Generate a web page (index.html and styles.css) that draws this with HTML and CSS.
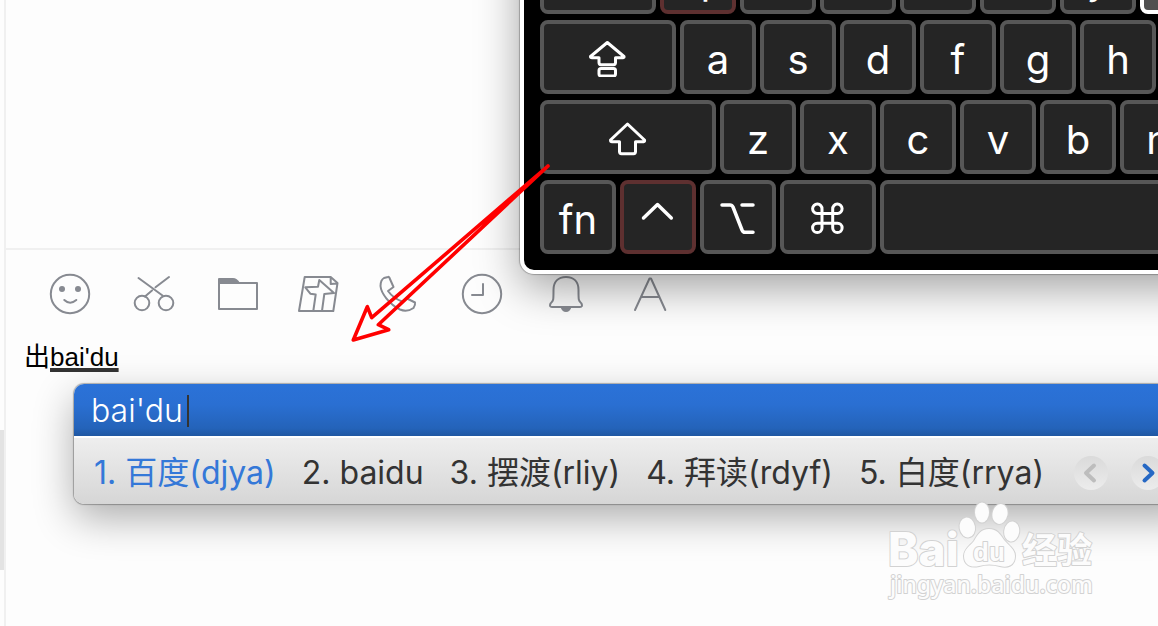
FILE: index.html
```html
<!DOCTYPE html>
<html lang="zh-CN">
<head>
<meta charset="utf-8">
<meta name="viewport" content="width=device-width, initial-scale=1">
<title>出bai'du</title>
<link rel="stylesheet" href="styles.css">
</head>
<body>
<div class="app">
  <div class="gutter"><div class="thumb"></div></div>
  <main class="chat">
    <section class="history"></section>
    <div class="toolbar">
      <button class="tool" type="button" aria-label="表情"><svg class="tool-icon" viewBox="0 0 44 44"><circle cx="22" cy="22" r="19.2"/><circle class="solid" cx="14" cy="17" r="3"/><circle class="solid" cx="30" cy="17" r="3"/><path d="M16.3 28Q22 33.400 28.300 28"/></svg></button>
      <button class="tool" type="button" aria-label="截图"><svg class="tool-icon" viewBox="0 0 44 44"><path d="M6.500 6L30.500 23.500M37 5L23.500 15.300M20 18.500L13 24.500"/><circle cx="10" cy="31" r="7.300"/><circle cx="34" cy="31" r="7.300"/></svg></button>
      <button class="tool" type="button" aria-label="文件"><svg class="tool-icon" viewBox="0 0 44 44"><path d="M3 11H41V37H3Z"/><path class="solid" d="M2 12V7Q2 6 3 6H17Q21 6 24 11V12Z"/></svg></button>
      <button class="tool tool-narrow" type="button" aria-label="地图"><svg class="tool-icon" viewBox="0 0 44 44"><path d="M8.700 5H34.700L41.500 11L37.300 39H3ZM34.700 5V12L41.500 11.500M17.300 39L19.700 22.500L14.300 21.700L9.300 15.300L22 14.700L23.300 8L38 21L28.300 22L26 39"/></svg></button>
      <button class="tool" type="button" aria-label="通话"><svg class="tool-icon" viewBox="0 0 44 44"><path d="M12 5Q13 4.500 13.500 6L17.500 15L12 19Q17 26 26 29.500L31 26.500L39 30.500Q39.500 33 37.500 36Q31 40.500 24 37.500C13 32 5 21 4.500 14Q4.500 8 8 6Z"/></svg></button>
      <button class="tool" type="button" aria-label="聊天记录"><svg class="tool-icon" viewBox="0 0 44 44"><circle cx="22" cy="22" r="19.200"/><path d="M23 12V23H12"/></svg></button>
      <button class="tool" type="button" aria-label="提醒"><svg class="tool-icon" viewBox="0 0 44 44"><path d="M22 5C14 5 9.500 10 9.500 18C9.500 29 9.500 28.500 6.500 31.500Q5 35 8 35H36Q39 35 37.500 31.500C34.500 28.500 34.500 29 34.500 18C34.500 10 30 5 22 5Z"/><path class="solid" d="M16.500 35H27.500Q26 40 22 40T16.500 35Z"/></svg></button>
      <button class="tool" type="button" aria-label="字体"><svg class="tool-icon" viewBox="0 0 44 44"><path d="M7 38L21.500 6.500H23L37.300 38M13 25H31.500"/></svg></button>
    </div>
    <div class="editor" role="textbox" aria-label="消息" contenteditable="true" spellcheck="false">出<span class="composing">bai'du</span></div>
  </main>
</div>

<section class="keyboard" aria-label="键盘">
  <div class="row">
    <button class="key key-tab" type="button" aria-label="tab"></button>
    <button class="key key-letter key-held" type="button">q</button>
    <button class="key" type="button" aria-label="w"></button>
    <button class="key" type="button" aria-label="e"></button>
    <button class="key" type="button" aria-label="r"></button>
    <button class="key" type="button" aria-label="t"></button>
    <button class="key key-letter" type="button">y</button>
    <button class="key key-pressed" type="button" aria-label="u"></button>
  </div>
  <div class="row">
    <button class="key key-caps" type="button" aria-label="caps lock"><svg class="key-icon" viewBox="0 0 40 40"><path d="M19.300 5.500L2.500 19.500Q2.500 20.700 4 20.700H11V25.500Q11 27.700 13 27.700H25.500Q27.500 27.700 27.500 25.500V20.700H35Q36.500 20.500 36 19.500Z"/><rect x="11" y="31.500" width="16.500" height="7.500" rx="2"/></svg></button>
    <button class="key key-letter" type="button">a</button>
    <button class="key key-letter" type="button">s</button>
    <button class="key key-letter" type="button">d</button>
    <button class="key key-letter" type="button">f</button>
    <button class="key key-letter" type="button">g</button>
    <button class="key key-letter" type="button">h</button>
  </div>
  <div class="row">
    <button class="key key-shift" type="button" aria-label="shift"><svg class="key-icon" viewBox="0 0 40 40"><path d="M19.500 7L2.500 23Q2.500 24.700 4 24.700H11.500V34.500Q11.500 36.700 13.500 36.700H25.500Q27.500 36.700 27.500 34.500V24.700H35.500Q37 24.500 36.500 23Z"/></svg></button>
    <button class="key key-letter" type="button">z</button>
    <button class="key key-letter" type="button">x</button>
    <button class="key key-letter" type="button">c</button>
    <button class="key key-letter" type="button">v</button>
    <button class="key key-letter" type="button">b</button>
    <button class="key key-letter" type="button">n</button>
  </div>
  <div class="row">
    <button class="key key-letter" type="button">fn</button>
    <button class="key key-held" type="button" aria-label="control"><svg class="key-icon key-icon-bold" viewBox="0 0 40 40"><path d="M5.500 21L19.500 7.500L33.300 21"/></svg></button>
    <button class="key" type="button" aria-label="option"><svg class="key-icon key-icon-bold" viewBox="0 0 40 40"><path d="M4 8H12Q14 8 15 10L24 33Q25 35.300 27 35.300H35M24 8H35"/></svg></button>
    <button class="key key-command" type="button" aria-label="command"><svg class="key-icon" viewBox="0 0 40 40"><path d="M14 16.500V12A4.700 4.700 0 1 0 9.200 16.500H29.500A4.700 4.700 0 1 0 24.700 12V31A4.700 4.700 0 1 0 29.500 26.200H9.200A4.700 4.700 0 1 0 14 31Z"/></svg></button>
    <button class="key key-space" type="button" aria-label="space"></button>
  </div>
</section>

<section class="ime" aria-label="输入法">
  <div class="ime-input">bai'du<span class="caret"></span></div>
  <div class="ime-bar">
    <ol class="candidates">
      <li class="candidate candidate-active">1. 百度(djya)</li>
      <li class="candidate">2. baidu</li>
      <li class="candidate">3. 摆渡(rliy)</li>
      <li class="candidate">4. 拜读(rdyf)</li>
      <li class="candidate">5. 白度(rrya)</li>
    </ol>
    <div class="pager">
      <button class="page" type="button" aria-label="上一页" disabled><svg class="page-icon" viewBox="0 0 34 34"><path d="M20 9.500L12 17L20 24.500"/></svg></button>
      <button class="page page-next" type="button" aria-label="下一页"><svg class="page-icon" viewBox="0 0 34 34"><path d="M13.500 9.500L21.500 17L13.500 24.500"/></svg></button>
    </div>
  </div>
</section>

<svg class="pointer" viewBox="0 0 202 182" aria-hidden="true"><path d="M198 6L21.700 157.700L17.300 146.700L3.300 180L38.700 169.700L28.300 164.700Z"/></svg>

<svg class="watermark" viewBox="0 0 226 110" role="img" aria-label="Baidu 经验">
  <g class="mark">
    <text class="mark-latin" x="8" y="70">Bai</text>
    <ellipse cx="102" cy="16.500" rx="7" ry="10"/>
    <ellipse cx="120" cy="18" rx="7.500" ry="10" transform="rotate(12 120 18)"/>
    <ellipse cx="87.300" cy="31.500" rx="7.700" ry="10" transform="rotate(-10 87.300 31.500)"/>
    <ellipse cx="131.700" cy="35.500" rx="7.500" ry="10" transform="rotate(8 131.700 35.500)"/>
    <path d="M109 33C117 33 120 38 124 44C129 50 135 53 135 60C135 70 127 72 120 70Q109 67 99 70C91 72 84 69 84 60C84 53 90 50 94 45C98 38 101 33 109 33Z"/>
    <text class="mark-du" x="93" y="65">du</text>
    <text class="mark-cjk" x="142" y="67">经验</text>
    <text class="mark-url" x="10" y="97">jingyan.baidu.com</text>
  </g>
</svg>
</body>
</html>
```
FILE: styles.css
```css
* {
  box-sizing: border-box;
}

body {
  margin: 0;
  position: relative;
  min-height: 100vh;
  overflow: hidden;
  background: #fdfdfd;
  font-family: "Liberation Sans", "Noto Sans CJK SC", sans-serif;
}

button {
  margin: 0;
  padding: 0;
  border: 0;
  background: none;
  color: inherit;
  font: inherit;
}

svg {
  display: block;
  flex: none;
}

.app {
  display: flex;
  min-height: 100vh;
}

.gutter {
  display: flex;
  width: 6px;
  padding: 430px 0 56px;
  border-right: 2px solid #f0f0f0;
}

.thumb {
  flex: 1;
  background: #e3e3e3;
}

.chat {
  display: flex;
  flex: 1;
  flex-direction: column;
}

.history {
  height: 250px;
  border-bottom: 2px solid #f0f0f0;
}

.toolbar {
  display: flex;
  gap: 40px;
  padding: 22px 42px;
}

.tool {
  display: flex;
  justify-content: center;
  width: 44px;
  height: 44px;
}

.tool-narrow {
  width: 36px;
}

.tool-icon {
  width: 44px;
  height: 44px;
  fill: none;
  stroke: #878a91;
  stroke-width: 2;
  stroke-linecap: round;
  stroke-linejoin: round;
}

.tool-icon .solid {
  fill: #878a91;
  stroke: none;
}

.editor {
  flex: 1;
  padding: 4px 18px;
  color: #000;
  font-size: 26px;
  line-height: 30px;
  outline: none;
}

.composing {
  text-decoration: underline 4px #333;
  text-decoration-skip-ink: none;
  text-underline-offset: 2px;
}

.keyboard {
  position: absolute;
  top: -80px;
  left: 520px;
  display: flex;
  flex-direction: column;
  gap: 6px;
  padding: 16px;
  border: 4px solid #fff;
  border-radius: 14px;
  background: #000;
  box-shadow: 0 0 1px 1px rgba(0, 0, 0, 0.25), 0 14px 44px rgba(0, 0, 0, 0.36);
  color: #fff;
  font-family: Inter, "Liberation Sans", sans-serif;
  font-size: 40px;
  line-height: 50px;
}

.row {
  display: flex;
  gap: 4px;
}

.key {
  display: flex;
  flex: none;
  align-items: center;
  justify-content: center;
  width: 76px;
  height: 74px;
  border: 4px solid #575757;
  border-radius: 8px;
  background: #252525;
}

.key-letter {
  padding-top: 5px;
}

.key-held {
  border-color: #5e3030;
}

.key-pressed {
  border-color: #fff;
  background: #505050;
}

.key-tab {
  width: 116px;
}

.key-caps {
  width: 136px;
}

.key-shift {
  width: 176px;
}

.key-command {
  width: 96px;
}

.key-space {
  width: 396px;
}

.key-icon {
  width: 40px;
  height: 40px;
  fill: none;
  stroke: #fff;
  stroke-width: 3;
  stroke-linecap: round;
  stroke-linejoin: round;
}

.key-icon-bold {
  stroke-width: 3.500;
}

.ime {
  position: absolute;
  top: 384px;
  right: -40px;
  left: 74px;
  border-radius: 10px;
  background: #fff;
  box-shadow: 0 0 1px 1px rgba(0, 0, 0, 0.28), 0 14px 40px rgba(0, 0, 0, 0.32);
  color: #333;
  font-family: Inter, "Noto Sans CJK SC", sans-serif;
  font-size: 32px;
  font-weight: 400;
  line-height: 52px;
}

.ime-input {
  display: flex;
  align-items: center;
  gap: 4px;
  height: 52px;
  padding-top: 2px;
  padding-left: 17px;
  border-radius: 10px 10px 0 0;
  background: linear-gradient(#2b72d8, #2a6fd2 40%, #2463b9 85%, #2057a2);
  color: #fff;
  font-weight: 300;
}

.caret {
  width: 2px;
  height: 32px;
  background: #333;
}

.ime-bar {
  display: flex;
  align-items: center;
  gap: 30px;
  height: 66px;
  margin-top: 2px;
  padding-top: 4px;
  padding-left: 20px;
  border-radius: 0 0 10px 10px;
  background: linear-gradient(#eee, #d6d6d6);
}

.candidates {
  display: flex;
  gap: 26px;
  margin: 0;
  padding: 0;
  list-style: none;
  white-space: nowrap;
}

.candidate-active {
  color: #3478d8;
}

.pager {
  display: flex;
  gap: 23px;
}

.page {
  width: 34px;
  height: 34px;
  border-radius: 50%;
  background: linear-gradient(#dadada, #ececec);
}

.page-icon {
  width: 34px;
  height: 34px;
  fill: none;
  stroke: #bdbdbd;
  stroke-width: 4;
  stroke-linecap: round;
  stroke-linejoin: round;
}

.page-next .page-icon {
  stroke: #2668c4;
}

.pointer {
  position: absolute;
  top: 160px;
  left: 350px;
  width: 202px;
  height: 182px;
  fill: none;
  stroke: #f00;
  stroke-width: 3.600;
  stroke-linecap: round;
  stroke-linejoin: round;
}

.watermark {
  position: absolute;
  right: 52px;
  bottom: 20px;
  width: 226px;
  height: 110px;
}

.mark {
  fill: #fcfcfc;
  stroke: #d2d2d2;
  stroke-width: 2;
  stroke-linejoin: round;
  paint-order: stroke;
}

.mark-latin {
  font: 800 46px Inter, sans-serif;
}

.mark-du {
  font: bold 26px "Liberation Sans", sans-serif;
}

.mark-cjk {
  font: bold 35px "Noto Sans CJK SC", sans-serif;
}

.mark-url {
  font: 500 23px "Noto Sans", sans-serif;
}
```
